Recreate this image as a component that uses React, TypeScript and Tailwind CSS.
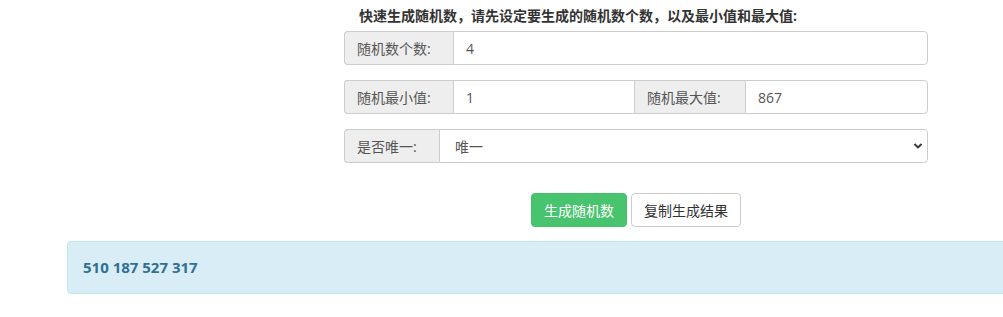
import { useState, type ReactNode } from 'react'

const font = "font-['Open_Sans','Noto_Sans_CJK_SC',sans-serif]"

function Addon({ children, className = '' }: { children: ReactNode; className?: string }) {
  return (
    <span
      className={`flex h-full shrink-0 items-center border border-[#ccc] bg-[#eee] px-3 text-[14px] text-[#555] ${className}`}
    >
      {children}
    </span>
  )
}

function Field({ value, onChange, className = '' }: { value: string; onChange: (v: string) => void; className?: string }) {
  return (
    <input
      value={value}
      onChange={(e) => onChange(e.target.value)}
      className={`h-full min-w-0 border border-[#ccc] bg-white px-3 text-[14px] text-[#555] outline-none ${font} ${className}`}
    />
  )
}

export default function App() {
  const [count, setCount] = useState('4')
  const [min, setMin] = useState('1')
  const [max, setMax] = useState('867')
  const [unique, setUnique] = useState('唯一')

  return (
    <div className={`h-[317px] w-[1003px] overflow-hidden bg-white ${font}`}>
      <div className="ml-[344px] w-[584px] pt-[6px]">
        <p className="m-0 pl-[15px] text-[14px] leading-[20px] font-bold text-[#333]">
          快速生成随机数，请先设定要生成的随机数个数，以及最小值和最大值:
        </p>

        <div className="mt-[5px] flex h-[34px]">
          <Addon className="w-[109px] rounded-l-[4px] border-r-0">随机数个数:</Addon>
          <Field value={count} onChange={setCount} className="flex-1 rounded-r-[4px]" />
        </div>

        <div className="mt-[15px] flex h-[34px]">
          <Addon className="w-[109px] rounded-l-[4px] border-r-0">随机最小值:</Addon>
          <Field value={min} onChange={setMin} className="w-[181px] border-r-0" />
          <Addon className="w-[111px] border-r-0">随机最大值:</Addon>
          <Field value={max} onChange={setMax} className="flex-1 rounded-r-[4px]" />
        </div>

        <div className="mt-[15px] flex h-[34px]">
          <Addon className="w-[95px] rounded-l-[4px] border-r-0">是否唯一:</Addon>
          <div className="relative h-full flex-1">
            <select
              value={unique}
              onChange={(e) => setUnique(e.target.value)}
              className={`h-full w-full appearance-none rounded-r-[4px] border border-[#ccc] bg-white pl-[15px] text-[14px] text-[#555] outline-none ${font}`}
            >
              <option>唯一</option>
              <option>不唯一</option>
            </select>
            <svg
              className="pointer-events-none absolute right-[5px] top-[13px]"
              width="10"
              height="8"
              viewBox="0 0 10 8"
            >
              <path d="M1.5 2 L5 5.5 L8.5 2" fill="none" stroke="#333" strokeWidth="1.8" />
            </svg>
          </div>
        </div>

        <div className="mt-[30px] flex justify-center gap-[4px]">
          <button className="h-[34px] w-[96px] rounded-[4px] border border-[#45bf69] bg-[#48c46e] text-[14px] text-white">
            生成随机数
          </button>
          <button className="h-[34px] w-[110px] rounded-[4px] border border-[#ccc] bg-white text-[14px] text-[#333]">
            复制生成结果
          </button>
        </div>
      </div>

      <div className="ml-[67px] mt-[14px] flex h-[53px] w-[960px] items-center rounded-[4px] border border-[#bce8f1] bg-[#d9edf7] px-[15px]">
        <span className="text-[15px] font-bold text-[#31708f]">510 187 527 317</span>
      </div>
    </div>
  )
}
